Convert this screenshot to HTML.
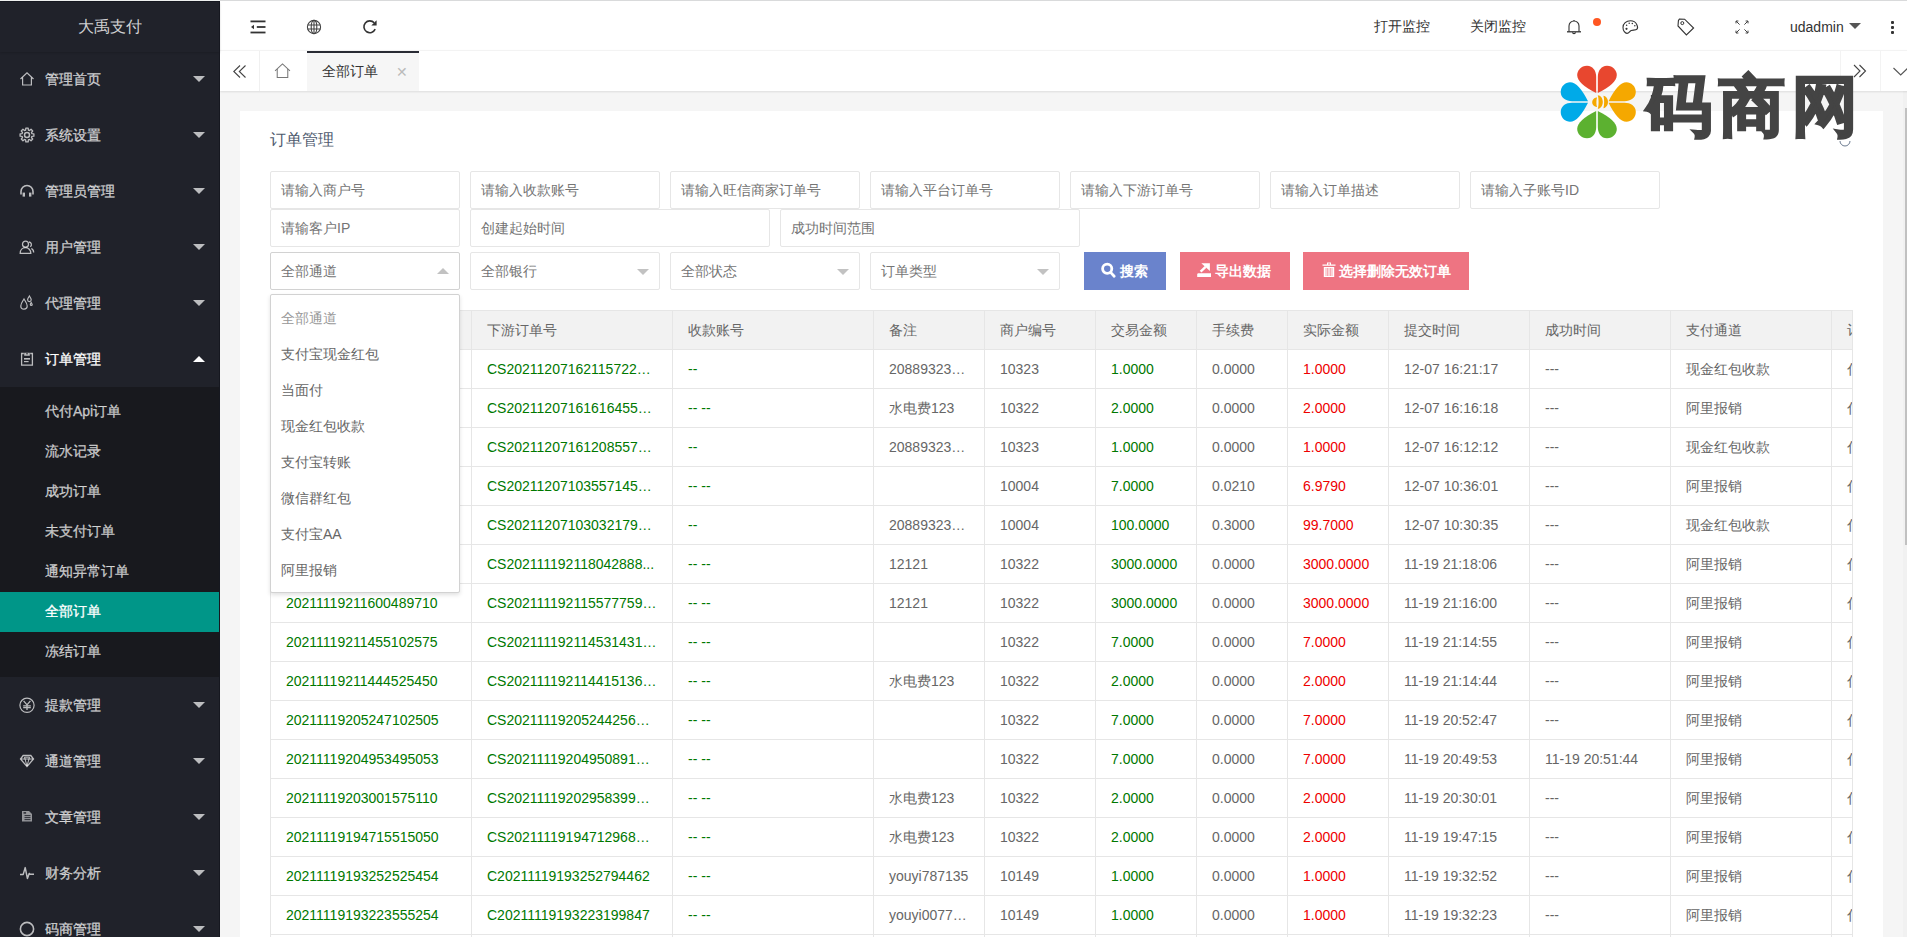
<!DOCTYPE html>
<html><head><meta charset="utf-8"><title>订单管理</title>
<style>
*{margin:0;padding:0;box-sizing:border-box}
html,body{width:1907px;height:937px;overflow:hidden;background:#f5f5f5;font-family:"Liberation Sans",sans-serif;font-size:14px;color:#666;position:relative}
.ic{position:absolute;display:block;overflow:visible}
#topline{position:absolute;left:220px;top:0;width:1687px;height:1px;background:#d9dadb;z-index:50}
#topline2{position:absolute;left:0;top:0;width:220px;height:1px;background:#eef0ef;z-index:50}
#topline3{position:absolute;left:0;top:1px;width:220px;height:1px;background:#161820;z-index:50}
#sideedge{position:absolute;left:219px;top:1px;width:1px;height:936px;background:#161820;z-index:50}
/* sidebar */
#side{position:absolute;left:0;top:0;width:220px;height:937px;background:#20222a;z-index:10}
#side .logo{position:absolute;left:0;top:2px;width:220px;height:50px;line-height:50px;text-align:center;font-size:16px;color:rgba(255,255,255,.8);box-shadow:0 1px 2px 0 rgba(0,0,0,.15)}
.mi{position:absolute;left:0;width:220px;height:56px;color:rgba(255,255,255,.7)}
.mi .ic{color:rgba(255,255,255,.7)}
.mi .mt{position:absolute;left:45px;top:1px;line-height:56px;font-size:14px;-webkit-text-stroke:0.3px currentColor}
.mi i{position:absolute;left:193px;top:26px;width:0;height:0;border-left:6px solid transparent;border-right:6px solid transparent}
.mi i.dn{border-top:6px solid rgba(255,255,255,.7)}
.mi i.up{border-bottom:6px solid #fff;top:26px}
.mi.open{color:#fff}
.child{position:absolute;left:0;top:387px;width:220px;height:290px;background:#18191e}
.ci{position:absolute;left:0;width:220px;height:40px;line-height:38px;padding-left:45px;color:rgba(255,255,255,.7);-webkit-text-stroke:0.3px currentColor}
.ci.act{background:#009688;color:#fff}
/* header */
#hdr{position:absolute;left:220px;top:0;width:1687px;height:50px;background:#fff;color:#333}
#hdr .ic{color:#333}
.htxt{position:absolute;top:0;line-height:50px;font-size:14px;color:#333}
/* tabs */
#tabs{position:absolute;left:220px;top:50px;width:1700px;height:41px;background:#fff;border-top:1px solid #f3f3f3;box-shadow:0 1px 2px 0 rgba(0,0,0,.1);z-index:5}
.tctl{position:absolute;top:0;height:40px;width:40px;border-left:1px solid #f3f3f3}
.tab{position:absolute;top:0;height:40px;line-height:40px}
/* card */
#card{position:absolute;left:240px;top:111px;width:1643px;height:840px;background:#fff}
.ctitle{position:absolute;left:270px;top:0;line-height:50px;font-size:16px}
.inp{position:absolute;height:38px;line-height:36px;border:1px solid #e6e6e6;background:#fff;padding-left:10px;color:#757575;font-size:14px;border-radius:2px}
.inp.sel i{position:absolute;right:10px;top:16px;border-left:6px solid transparent;border-right:6px solid transparent;border-top:6px solid #c2c2c2}
.inp.sel.on{border-color:#d2d2d2}
.inp.sel.on i{border-top:0;border-bottom:6px solid #c2c2c2;top:15px}
.btn{position:absolute;top:252px;height:38px;line-height:38px;color:#fff;font-size:14px;text-align:left}
/* table */
#tbl{position:absolute;left:270px;top:310px;width:1583px;height:700px;overflow:hidden;border-left:1px solid #e6e6e6;border-top:1px solid #e6e6e6}
#tbl:after{content:"";position:absolute;right:0;top:0;width:1px;height:100%;background:#e6e6e6}
.thead{position:absolute;left:0;top:0;width:1720px;height:39px;background:#f2f2f2;border-bottom:1px solid #e6e6e6}
.th,.td{position:absolute;top:0;height:38px;line-height:38px;padding-left:15px;border-right:1px solid #e6e6e6;white-space:nowrap;overflow:hidden;font-size:14px}
.th{color:#666}
.tr{position:absolute;left:0;width:1720px;height:39px;border-bottom:1px solid #e6e6e6}
.td{color:#666;letter-spacing:0}
.td.g{color:#007800}
.td.r{color:#e00}
/* dropdown */
.dd{position:absolute;left:270px;top:294px;width:190px;height:299px;background:#fff;border:1px solid #d2d2d2;box-shadow:0 2px 4px rgba(0,0,0,.12);padding:5px 0;z-index:20;border-radius:2px}
.ddi{height:36px;line-height:36px;padding-left:10px;color:#666}
.ddi.tip{color:#999}
/* scrollbar */
#sb{position:absolute;left:1903px;top:91px;width:4px;height:846px;background:#f1f1f1}
#sbt{position:absolute;left:1905px;top:108px;width:2px;height:437px;background:#c1c1c1}

</style></head>
<body>
<div id="topline"></div><div id="topline2"></div><div id="topline3"></div><div id="sideedge"></div>
<div id="side">
<div class="logo">大禹支付</div>
<div class="mi" style="top:50px"><svg class="ic" style="left:19px;top:21px;width:16px;height:16px" viewBox="0 0 16 16" ><path d="M1.5 8 L8 1.8 L14.5 8" fill="none" stroke="currentColor" stroke-width="1.2"/><path d="M3.6 6.5 V14 H12.4 V6.5" fill="none" stroke="currentColor" stroke-width="1.2"/></svg><span class="mt">管理首页</span><i class="dn"></i></div>
<div class="mi" style="top:106px"><svg class="ic" style="left:19px;top:21px;width:16px;height:16px" viewBox="0 0 16 16" ><g fill="none" stroke="currentColor" stroke-width="1.3" stroke-linejoin="round"><path d="M6.64 3.08 L6.82 1.10 L9.18 1.10 L9.36 3.08 L10.51 3.56 L12.04 2.28 L13.72 3.96 L12.44 5.49 L12.92 6.64 L14.90 6.82 L14.90 9.18 L12.92 9.36 L12.44 10.51 L13.72 12.04 L12.04 13.72 L10.51 12.44 L9.36 12.92 L9.18 14.90 L6.82 14.90 L6.64 12.92 L5.49 12.44 L3.96 13.72 L2.28 12.04 L3.56 10.51 L3.08 9.36 L1.10 9.18 L1.10 6.82 L3.08 6.64 L3.56 5.49 L2.28 3.96 L3.96 2.28 L5.49 3.56z"/><circle cx="8" cy="8" r="2.5" stroke-width="1.5"/></g></svg><span class="mt">系统设置</span><i class="dn"></i></div>
<div class="mi" style="top:162px"><svg class="ic" style="left:19px;top:21px;width:16px;height:16px" viewBox="0 0 16 16" ><g fill="none" stroke="currentColor" stroke-width="1.6"><path d="M2 11.5 V8.5 A6 6 0 0 1 14 8.5 V11.5"/></g><rect x="3.6" y="9.6" width="2.4" height="4" fill="currentColor"/><rect x="10" y="9.6" width="2.4" height="4" fill="currentColor"/></svg><span class="mt">管理员管理</span><i class="dn"></i></div>
<div class="mi" style="top:218px"><svg class="ic" style="left:19px;top:21px;width:16px;height:16px" viewBox="0 0 16 16" ><g fill="none" stroke="currentColor" stroke-width="1.3"><path d="M6.5 2.2a3 3 0 1 1 0 6a3 3 0 1 1 0-6z"/><path d="M1.2 14.3c0-3.2 2.3-5.6 5.3-5.6s5.3 2.4 5.3 5.6z"/><path d="M10 3a2.6 2.6 0 0 1 1.2 4.8M12.4 9.4c1.4.9 2.3 2.5 2.3 4.2"/></g></svg><span class="mt">用户管理</span><i class="dn"></i></div>
<div class="mi" style="top:274px"><svg class="ic" style="left:19px;top:21px;width:16px;height:16px" viewBox="0 0 16 16" ><g fill="none" stroke="currentColor" stroke-width="1.2"><path d="M5 4 C3.5 6.5 1.8 8.5 1.8 10.9 a3.2 3.2 0 0 0 6.4 0 C8.2 8.5 6.5 6.5 5 4z"/><path d="M10.4 1 C9.6 2.4 8.6 3.5 8.6 4.8 a1.8 1.8 0 0 0 3.6 0 C12.2 3.5 11.2 2.4 10.4 1z"/><path d="M12.2 7.6 C11.8 8.3 11.3 8.9 11.3 9.5 a.95 .95 0 0 0 1.9 0 C13.2 8.9 12.6 8.3 12.2 7.6z"/></g></svg><span class="mt">代理管理</span><i class="dn"></i></div>
<div class="mi open" style="top:330px"><svg class="ic" style="left:19px;top:21px;width:16px;height:16px" viewBox="0 0 16 16" ><g fill="none" stroke="currentColor" stroke-width="1.3"><path d="M4.8 2.5 H2.6 V14.2 H13.4 V2.5 H11.2"/></g><path d="M5.2 1.8 h5.6 v3 h-5.6z" fill="currentColor"/><circle cx="8" cy="2.8" r="0.8" fill="#20222a"/><rect x="5" y="7" width="6" height="1.6" fill="currentColor"/><rect x="5" y="10" width="4.6" height="1.2" fill="currentColor"/></svg><span class="mt">订单管理</span><i class="up"></i></div>
<div class="mi" style="top:676px"><svg class="ic" style="left:19px;top:21px;width:16px;height:16px" viewBox="0 0 16 16" ><g fill="none" stroke="currentColor"><circle cx="8" cy="8.3" r="7.1" stroke-width="1.2"/><path d="M4.6 3.8 L8 7.8 L11.4 3.8 M8 7.8 V13 M4.2 8.8 H11.8 M4.2 10.7 H11.8" stroke-width="1.3"/></g></svg><span class="mt">提款管理</span><i class="dn"></i></div>
<div class="mi" style="top:732px"><svg class="ic" style="left:19px;top:21px;width:16px;height:16px" viewBox="0 0 16 16" ><g fill="none" stroke="currentColor" stroke-width="1.3"><path d="M4.2 2.5 H11.8 L14.5 6 L8 13.5 L1.5 6z"/><path d="M5.5 4.2 H10.5 L8 13 z M1.8 6 H14.2" stroke-width="1"/></g></svg><span class="mt">通道管理</span><i class="dn"></i></div>
<div class="mi" style="top:788px"><svg class="ic" style="left:19px;top:21px;width:16px;height:16px" viewBox="0 0 16 16" ><path d="M3 2 H10 L13 5 V12.5 H3z" fill="currentColor" opacity=".75"/><g fill="#20222a"><rect x="4.5" y="3.2" width="2.6" height="1.4"/><rect x="5.5" y="6.2" width="6" height=".9"/><rect x="5.5" y="8.2" width="6" height=".9"/><rect x="5.5" y="10.2" width="6" height=".9"/></g></svg><span class="mt">文章管理</span><i class="dn"></i></div>
<div class="mi" style="top:844px"><svg class="ic" style="left:19px;top:21px;width:16px;height:16px" viewBox="0 0 16 16" ><path d="M1 9.4 H4.2 L6.2 2.6 L8.4 13.4 L10.2 8.4 L11 9.2 H15" fill="none" stroke="currentColor" stroke-width="1.5" stroke-linejoin="round"/></svg><span class="mt">财务分析</span><i class="dn"></i></div>
<div class="mi" style="top:900px"><svg class="ic" style="left:19px;top:21px;width:16px;height:16px" viewBox="0 0 16 16" ><circle cx="8" cy="8" r="6.6" fill="none" stroke="currentColor" stroke-width="1.6"/></svg><span class="mt">码商管理</span><i class="dn"></i></div>
<div class="child">
<div class="ci" style="top:5px">代付Api订单</div>
<div class="ci" style="top:45px">流水记录</div>
<div class="ci" style="top:85px">成功订单</div>
<div class="ci" style="top:125px">未支付订单</div>
<div class="ci" style="top:165px">通知异常订单</div>
<div class="ci act" style="top:205px">全部订单</div>
<div class="ci" style="top:245px">冻结订单</div>
</div></div>
<div id="hdr">
  <svg class="ic" style="left:30px;top:19px;width:16px;height:16px" viewBox="0 0 16 16"><rect x="0.5" y="1.5" width="15" height="1.8" fill="#333"/><rect x="6.8" y="7.1" width="8.7" height="1.8" fill="#333"/><rect x="0.5" y="12.6" width="15" height="1.8" fill="#333"/><path d="M1 8 L4 5.8 V10.2z" fill="#333"/></svg>
  <svg class="ic" style="left:86px;top:19px;width:16px;height:16px" viewBox="0 0 16 16"><g fill="none" stroke="#444" stroke-width="1.1"><circle cx="8" cy="8" r="6.6"/><ellipse cx="8" cy="8" rx="2.8" ry="6.6"/><path d="M8 1.4 V14.6 M1.6 6 H14.4 M1.6 10 H14.4"/></g></svg>
  <svg class="ic" style="left:142px;top:19px;width:16px;height:16px" viewBox="0 0 16 16"><path d="M13.2 10.2 A5.9 5.9 0 1 1 12.2 3.8" fill="none" stroke="#333" stroke-width="1.6"/><path d="M14.6 1.3 V6.6 H9.3z" fill="#333"/></svg>
  <div class="htxt" style="left:1154px;top:1px">打开监控</div>
  <div class="htxt" style="left:1250px;top:1px">关闭监控</div>
  <svg class="ic" style="left:1346px;top:19px;width:16px;height:16px" viewBox="0 0 16 16"><g fill="none" stroke="#333" stroke-width="1.1"><path d="M3 12.8 V7 A5 5 0 0 1 13 7 V12.8"/><path d="M1 12.8 H15" stroke-width="1.3"/><path d="M6.6 13.2 A1.4 1.4 0 0 0 9.4 13.2"/><path d="M8 1 V2"/></g></svg>
  <div style="position:absolute;left:1373px;top:18px;width:8px;height:8px;border-radius:50%;background:#ff5722"></div>
  <svg class="ic" style="left:1402px;top:19px;width:17px;height:16px" viewBox="0 0 17 16"><g fill="none" stroke="#333" stroke-width="1.1"><path d="M8.5 1.8 C4.2 1.8 1 4.6 1 8.4 C1 11.8 3.2 14.4 5 14.4 C7.2 14.4 7.5 12 9.2 11.4 C11 10.8 13.8 11.6 15 10.2 C16.4 8.6 15 1.8 8.5 1.8z"/></g><g fill="#333"><circle cx="4.5" cy="9.8" r="1.1"/><circle cx="4.6" cy="6.2" r=".75"/><circle cx="7.2" cy="4.2" r=".75"/><circle cx="10.3" cy="4.4" r=".75"/><circle cx="12.8" cy="6.8" r=".75"/></g></svg>
  <svg class="ic" style="left:1457px;top:18px;width:18px;height:18px" viewBox="0 0 18 18"><g fill="none" stroke="#333" stroke-width="1.1"><path d="M1.4 2.6 L2.4 1 L7.6 1.2 L16.6 10 L9.4 17 L1 8z"/><circle cx="5.3" cy="5.1" r="1.5" stroke-width="1"/></g></svg>
  <svg class="ic" style="left:1515px;top:20px;width:14px;height:14px" viewBox="0 0 14 14"><g fill="none" stroke="#444" stroke-width="1"><path d="M1 1 L4.6 4.6 M1 1 H3.4 M1 1 V3.4"/><path d="M13 1 L9.4 4.6 M13 1 H10.6 M13 1 V3.4"/><path d="M1 13 L4.6 9.4 M1 13 H3.4 M1 13 V10.6"/><path d="M13 13 L9.4 9.4 M13 13 H10.6 M13 13 V10.6"/></g></svg>
  <div class="htxt" style="left:1570px;top:2px">udadmin</div>
  <div style="position:absolute;left:1629px;top:23px;width:0;height:0;border-left:6px solid transparent;border-right:6px solid transparent;border-top:6px solid #555"></div>
  <div style="position:absolute;left:1671px;top:21px;width:3px;height:3px;background:#333;border-radius:1px"></div>
  <div style="position:absolute;left:1671px;top:26px;width:3px;height:3px;background:#333;border-radius:1px"></div>
  <div style="position:absolute;left:1671px;top:31px;width:3px;height:3px;background:#333;border-radius:1px"></div>
</div>
<div id="tabs">
  <svg class="ic" style="left:12px;top:13px;width:16px;height:16px" viewBox="0 0 16 16"><path d="M8 1.5 L1.8 7.5 L8 13.5 M13.5 1.5 L7.3 7.5 L13.5 13.5" fill="none" stroke="#444" stroke-width="1.1"/></svg>
  <div class="tctl" style="left:39px;width:1px;border-left:1px solid #f0f0f0"></div>
  <svg class="ic" style="left:54px;top:12px;width:17px;height:15px" viewBox="0 0 16 14.5"><path d="M0.8 7.6 L8 0.9 L15.2 7.6" fill="none" stroke="#777" stroke-width="1"/><path d="M2.9 5.9 V14 H13.1 V5.9" fill="none" stroke="#777" stroke-width="1"/></svg>
  <div class="tab" style="left:87px;width:112px;background:#f6f6f6"><div style="position:absolute;left:0;top:0;width:112px;height:2px;background:#292b34"></div><span style="position:absolute;left:15px;top:0;color:#333">全部订单</span><span style="position:absolute;left:89px;top:1px;color:#bbb;font-size:14px">✕</span></div>
  <div class="tctl" style="left:1620px"></div>
  <svg class="ic" style="left:1633px;top:13px;width:14px;height:14px" viewBox="0 0 14 14"><path d="M1 1 L7 7 L1 13 M6.5 1 L12.5 7 L6.5 13" fill="none" stroke="#444" stroke-width="1.1"/></svg>
  <div class="tctl" style="left:1660px"></div>
  <svg class="ic" style="left:1673px;top:16px;width:16px;height:9px" viewBox="0 0 16 9"><path d="M0.5 1 L7.7 8 L14.9 1" fill="none" stroke="#555" stroke-width="1.1"/></svg>
</div>
<div id="sb"></div><div id="sbt"></div>
<div id="card"></div>
<div class="ctitle" style="left:270px;top:115px;color:#4e5a6e">订单管理</div>
<div class="inp" style="left:270px;top:171px;width:190px">请输入商户号</div>
<div class="inp" style="left:470px;top:171px;width:190px">请输入收款账号</div>
<div class="inp" style="left:670px;top:171px;width:190px">请输入旺信商家订单号</div>
<div class="inp" style="left:870px;top:171px;width:190px">请输入平台订单号</div>
<div class="inp" style="left:1070px;top:171px;width:190px">请输入下游订单号</div>
<div class="inp" style="left:1270px;top:171px;width:190px">请输入订单描述</div>
<div class="inp" style="left:1470px;top:171px;width:190px">请输入子账号ID</div>
<div class="inp" style="left:270px;top:209px;width:190px">请输客户IP</div>
<div class="inp" style="left:470px;top:209px;width:300px">创建起始时间</div>
<div class="inp" style="left:780px;top:209px;width:300px">成功时间范围</div>
<div class="inp sel on" style="left:270px;top:252px;width:190px">全部通道<i></i></div>
<div class="inp sel" style="left:470px;top:252px;width:190px">全部银行<i></i></div>
<div class="inp sel" style="left:670px;top:252px;width:190px">全部状态<i></i></div>
<div class="inp sel" style="left:870px;top:252px;width:190px">订单类型<i></i></div>
<div class="btn" style="left:1084px;width:82px;background:#6a83cc">
  <svg class="ic" style="left:17px;top:11px;width:15px;height:16px" viewBox="0 0 15 16"><circle cx="6.2" cy="5.8" r="4.6" fill="none" stroke="#fff" stroke-width="2.8"/><path d="M9.6 9.4 L13.2 13.2" stroke="#fff" stroke-width="2.8" stroke-linecap="round"/></svg>
  <span style="position:absolute;left:36px;top:0;font-weight:bold">搜索</span></div>
<div class="btn" style="left:1180px;width:110px;background:#ee7482">
  <svg class="ic" style="left:17px;top:11px;width:15px;height:16px" viewBox="0 0 15 16"><path d="M1 10.2 H14 V14.1 H0.2 V11z" fill="#fff"/><path d="M4.3 0.2 H12.9 V7.9z" fill="#fff"/><path d="M3.6 8.6 L8.6 3.8" stroke="#fff" stroke-width="2.4"/></svg>
  <span style="position:absolute;left:35px;top:0;font-weight:bold">导出数据</span></div>
<div class="btn" style="left:1303px;width:166px;background:#ee7482">
  <svg class="ic" style="left:19px;top:10px;width:14px;height:16px" viewBox="0 0 14 16"><path d="M0.5 2.5 H13.5 V3.8 H0.5z M5 0.5 H9 V2.5 H8 V1.4 H6 V2.5 H5z" fill="#fff"/><path d="M1.8 5 H12.2 V15 H1.8z" fill="#fff"/><path d="M4 6 V14 M5.5 6 V14 M7 6 V14 M8.5 6 V14 M10 6 V14" stroke="#ee7482" stroke-width=".6"/></svg>
  <span style="position:absolute;left:36px;top:0;font-weight:bold">选择删除无效订单</span></div>
<div id="tbl">
<div class="thead">
<div class="th" style="left:0px;width:201px">订单号</div>
<div class="th" style="left:201px;width:201px">下游订单号</div>
<div class="th" style="left:402px;width:201px">收款账号</div>
<div class="th" style="left:603px;width:111px">备注</div>
<div class="th" style="left:714px;width:111px">商户编号</div>
<div class="th" style="left:825px;width:101px">交易金额</div>
<div class="th" style="left:926px;width:91px">手续费</div>
<div class="th" style="left:1017px;width:101px">实际金额</div>
<div class="th" style="left:1118px;width:141px">提交时间</div>
<div class="th" style="left:1259px;width:141px">成功时间</div>
<div class="th" style="left:1400px;width:161px">支付通道</div>
<div class="th" style="left:1561px;width:159px">订单描述</div>
</div>
<div class="tr" style="top:39px">
<div class="td g" style="left:0px;width:201px">20211207162117xxxxx</div>
<div class="td g" style="left:201px;width:201px">CS20211207162115722…</div>
<div class="td g" style="left:402px;width:201px">--</div>
<div class="td n" style="left:603px;width:111px">20889323…</div>
<div class="td n" style="left:714px;width:111px">10323</div>
<div class="td g" style="left:825px;width:101px">1.0000</div>
<div class="td n" style="left:926px;width:91px">0.0000</div>
<div class="td r" style="left:1017px;width:101px">1.0000</div>
<div class="td n" style="left:1118px;width:141px">12-07 16:21:17</div>
<div class="td n" style="left:1259px;width:141px">---</div>
<div class="td n" style="left:1400px;width:161px">现金红包收款</div>
<div class="td n" style="left:1561px;width:159px">付</div>
</div>
<div class="tr" style="top:78px">
<div class="td g" style="left:0px;width:201px">20211207161618xxxxx</div>
<div class="td g" style="left:201px;width:201px">CS20211207161616455…</div>
<div class="td g" style="left:402px;width:201px">-- --</div>
<div class="td n" style="left:603px;width:111px">水电费123</div>
<div class="td n" style="left:714px;width:111px">10322</div>
<div class="td g" style="left:825px;width:101px">2.0000</div>
<div class="td n" style="left:926px;width:91px">0.0000</div>
<div class="td r" style="left:1017px;width:101px">2.0000</div>
<div class="td n" style="left:1118px;width:141px">12-07 16:16:18</div>
<div class="td n" style="left:1259px;width:141px">---</div>
<div class="td n" style="left:1400px;width:161px">阿里报销</div>
<div class="td n" style="left:1561px;width:159px">付</div>
</div>
<div class="tr" style="top:117px">
<div class="td g" style="left:0px;width:201px">20211207161212xxxxx</div>
<div class="td g" style="left:201px;width:201px">CS20211207161208557…</div>
<div class="td g" style="left:402px;width:201px">--</div>
<div class="td n" style="left:603px;width:111px">20889323…</div>
<div class="td n" style="left:714px;width:111px">10323</div>
<div class="td g" style="left:825px;width:101px">1.0000</div>
<div class="td n" style="left:926px;width:91px">0.0000</div>
<div class="td r" style="left:1017px;width:101px">1.0000</div>
<div class="td n" style="left:1118px;width:141px">12-07 16:12:12</div>
<div class="td n" style="left:1259px;width:141px">---</div>
<div class="td n" style="left:1400px;width:161px">现金红包收款</div>
<div class="td n" style="left:1561px;width:159px">付</div>
</div>
<div class="tr" style="top:156px">
<div class="td g" style="left:0px;width:201px">20211207103601xxxxx</div>
<div class="td g" style="left:201px;width:201px">CS20211207103557145…</div>
<div class="td g" style="left:402px;width:201px">-- --</div>
<div class="td n" style="left:603px;width:111px"></div>
<div class="td n" style="left:714px;width:111px">10004</div>
<div class="td g" style="left:825px;width:101px">7.0000</div>
<div class="td n" style="left:926px;width:91px">0.0210</div>
<div class="td r" style="left:1017px;width:101px">6.9790</div>
<div class="td n" style="left:1118px;width:141px">12-07 10:36:01</div>
<div class="td n" style="left:1259px;width:141px">---</div>
<div class="td n" style="left:1400px;width:161px">阿里报销</div>
<div class="td n" style="left:1561px;width:159px">付</div>
</div>
<div class="tr" style="top:195px">
<div class="td g" style="left:0px;width:201px">20211207103035xxxxx</div>
<div class="td g" style="left:201px;width:201px">CS20211207103032179…</div>
<div class="td g" style="left:402px;width:201px">--</div>
<div class="td n" style="left:603px;width:111px">20889323…</div>
<div class="td n" style="left:714px;width:111px">10004</div>
<div class="td g" style="left:825px;width:101px">100.0000</div>
<div class="td n" style="left:926px;width:91px">0.3000</div>
<div class="td r" style="left:1017px;width:101px">99.7000</div>
<div class="td n" style="left:1118px;width:141px">12-07 10:30:35</div>
<div class="td n" style="left:1259px;width:141px">---</div>
<div class="td n" style="left:1400px;width:161px">现金红包收款</div>
<div class="td n" style="left:1561px;width:159px">付</div>
</div>
<div class="tr" style="top:234px">
<div class="td g" style="left:0px;width:201px">20211119211806xxxxx</div>
<div class="td g" style="left:201px;width:201px">CS202111192118042888...</div>
<div class="td g" style="left:402px;width:201px">-- --</div>
<div class="td n" style="left:603px;width:111px">12121</div>
<div class="td n" style="left:714px;width:111px">10322</div>
<div class="td g" style="left:825px;width:101px">3000.0000</div>
<div class="td n" style="left:926px;width:91px">0.0000</div>
<div class="td r" style="left:1017px;width:101px">3000.0000</div>
<div class="td n" style="left:1118px;width:141px">11-19 21:18:06</div>
<div class="td n" style="left:1259px;width:141px">---</div>
<div class="td n" style="left:1400px;width:161px">阿里报销</div>
<div class="td n" style="left:1561px;width:159px">付</div>
</div>
<div class="tr" style="top:273px">
<div class="td g" style="left:0px;width:201px">20211119211600489710</div>
<div class="td g" style="left:201px;width:201px">CS202111192115577759…</div>
<div class="td g" style="left:402px;width:201px">-- --</div>
<div class="td n" style="left:603px;width:111px">12121</div>
<div class="td n" style="left:714px;width:111px">10322</div>
<div class="td g" style="left:825px;width:101px">3000.0000</div>
<div class="td n" style="left:926px;width:91px">0.0000</div>
<div class="td r" style="left:1017px;width:101px">3000.0000</div>
<div class="td n" style="left:1118px;width:141px">11-19 21:16:00</div>
<div class="td n" style="left:1259px;width:141px">---</div>
<div class="td n" style="left:1400px;width:161px">阿里报销</div>
<div class="td n" style="left:1561px;width:159px">付</div>
</div>
<div class="tr" style="top:312px">
<div class="td g" style="left:0px;width:201px">20211119211455102575</div>
<div class="td g" style="left:201px;width:201px">CS202111192114531431…</div>
<div class="td g" style="left:402px;width:201px">-- --</div>
<div class="td n" style="left:603px;width:111px"></div>
<div class="td n" style="left:714px;width:111px">10322</div>
<div class="td g" style="left:825px;width:101px">7.0000</div>
<div class="td n" style="left:926px;width:91px">0.0000</div>
<div class="td r" style="left:1017px;width:101px">7.0000</div>
<div class="td n" style="left:1118px;width:141px">11-19 21:14:55</div>
<div class="td n" style="left:1259px;width:141px">---</div>
<div class="td n" style="left:1400px;width:161px">阿里报销</div>
<div class="td n" style="left:1561px;width:159px">付</div>
</div>
<div class="tr" style="top:351px">
<div class="td g" style="left:0px;width:201px">20211119211444525450</div>
<div class="td g" style="left:201px;width:201px">CS202111192114415136…</div>
<div class="td g" style="left:402px;width:201px">-- --</div>
<div class="td n" style="left:603px;width:111px">水电费123</div>
<div class="td n" style="left:714px;width:111px">10322</div>
<div class="td g" style="left:825px;width:101px">2.0000</div>
<div class="td n" style="left:926px;width:91px">0.0000</div>
<div class="td r" style="left:1017px;width:101px">2.0000</div>
<div class="td n" style="left:1118px;width:141px">11-19 21:14:44</div>
<div class="td n" style="left:1259px;width:141px">---</div>
<div class="td n" style="left:1400px;width:161px">阿里报销</div>
<div class="td n" style="left:1561px;width:159px">付</div>
</div>
<div class="tr" style="top:390px">
<div class="td g" style="left:0px;width:201px">20211119205247102505</div>
<div class="td g" style="left:201px;width:201px">CS20211119205244256…</div>
<div class="td g" style="left:402px;width:201px">-- --</div>
<div class="td n" style="left:603px;width:111px"></div>
<div class="td n" style="left:714px;width:111px">10322</div>
<div class="td g" style="left:825px;width:101px">7.0000</div>
<div class="td n" style="left:926px;width:91px">0.0000</div>
<div class="td r" style="left:1017px;width:101px">7.0000</div>
<div class="td n" style="left:1118px;width:141px">11-19 20:52:47</div>
<div class="td n" style="left:1259px;width:141px">---</div>
<div class="td n" style="left:1400px;width:161px">阿里报销</div>
<div class="td n" style="left:1561px;width:159px">付</div>
</div>
<div class="tr" style="top:429px">
<div class="td g" style="left:0px;width:201px">20211119204953495053</div>
<div class="td g" style="left:201px;width:201px">CS20211119204950891…</div>
<div class="td g" style="left:402px;width:201px">-- --</div>
<div class="td n" style="left:603px;width:111px"></div>
<div class="td n" style="left:714px;width:111px">10322</div>
<div class="td g" style="left:825px;width:101px">7.0000</div>
<div class="td n" style="left:926px;width:91px">0.0000</div>
<div class="td r" style="left:1017px;width:101px">7.0000</div>
<div class="td n" style="left:1118px;width:141px">11-19 20:49:53</div>
<div class="td n" style="left:1259px;width:141px">11-19 20:51:44</div>
<div class="td n" style="left:1400px;width:161px">阿里报销</div>
<div class="td n" style="left:1561px;width:159px">付</div>
</div>
<div class="tr" style="top:468px">
<div class="td g" style="left:0px;width:201px">20211119203001575110</div>
<div class="td g" style="left:201px;width:201px">CS20211119202958399…</div>
<div class="td g" style="left:402px;width:201px">-- --</div>
<div class="td n" style="left:603px;width:111px">水电费123</div>
<div class="td n" style="left:714px;width:111px">10322</div>
<div class="td g" style="left:825px;width:101px">2.0000</div>
<div class="td n" style="left:926px;width:91px">0.0000</div>
<div class="td r" style="left:1017px;width:101px">2.0000</div>
<div class="td n" style="left:1118px;width:141px">11-19 20:30:01</div>
<div class="td n" style="left:1259px;width:141px">---</div>
<div class="td n" style="left:1400px;width:161px">阿里报销</div>
<div class="td n" style="left:1561px;width:159px">付</div>
</div>
<div class="tr" style="top:507px">
<div class="td g" style="left:0px;width:201px">20211119194715515050</div>
<div class="td g" style="left:201px;width:201px">CS20211119194712968…</div>
<div class="td g" style="left:402px;width:201px">-- --</div>
<div class="td n" style="left:603px;width:111px">水电费123</div>
<div class="td n" style="left:714px;width:111px">10322</div>
<div class="td g" style="left:825px;width:101px">2.0000</div>
<div class="td n" style="left:926px;width:91px">0.0000</div>
<div class="td r" style="left:1017px;width:101px">2.0000</div>
<div class="td n" style="left:1118px;width:141px">11-19 19:47:15</div>
<div class="td n" style="left:1259px;width:141px">---</div>
<div class="td n" style="left:1400px;width:161px">阿里报销</div>
<div class="td n" style="left:1561px;width:159px">付</div>
</div>
<div class="tr" style="top:546px">
<div class="td g" style="left:0px;width:201px">20211119193252525454</div>
<div class="td g" style="left:201px;width:201px">C20211119193252794462</div>
<div class="td g" style="left:402px;width:201px">-- --</div>
<div class="td n" style="left:603px;width:111px">youyi787135</div>
<div class="td n" style="left:714px;width:111px">10149</div>
<div class="td g" style="left:825px;width:101px">1.0000</div>
<div class="td n" style="left:926px;width:91px">0.0000</div>
<div class="td r" style="left:1017px;width:101px">1.0000</div>
<div class="td n" style="left:1118px;width:141px">11-19 19:32:52</div>
<div class="td n" style="left:1259px;width:141px">---</div>
<div class="td n" style="left:1400px;width:161px">阿里报销</div>
<div class="td n" style="left:1561px;width:159px">付</div>
</div>
<div class="tr" style="top:585px">
<div class="td g" style="left:0px;width:201px">20211119193223555254</div>
<div class="td g" style="left:201px;width:201px">C20211119193223199847</div>
<div class="td g" style="left:402px;width:201px">-- --</div>
<div class="td n" style="left:603px;width:111px">youyi0077…</div>
<div class="td n" style="left:714px;width:111px">10149</div>
<div class="td g" style="left:825px;width:101px">1.0000</div>
<div class="td n" style="left:926px;width:91px">0.0000</div>
<div class="td r" style="left:1017px;width:101px">1.0000</div>
<div class="td n" style="left:1118px;width:141px">11-19 19:32:23</div>
<div class="td n" style="left:1259px;width:141px">---</div>
<div class="td n" style="left:1400px;width:161px">阿里报销</div>
<div class="td n" style="left:1561px;width:159px">付</div>
</div>
<div class="tr" style="top:624px">
<div class="td g" style="left:0px;width:201px">20211119192xxxxxxxxx</div>
<div class="td g" style="left:201px;width:201px">C20211119192xxxxxxxx</div>
<div class="td g" style="left:402px;width:201px">-- --</div>
<div class="td n" style="left:603px;width:111px"></div>
<div class="td n" style="left:714px;width:111px">10149</div>
<div class="td g" style="left:825px;width:101px">1.0000</div>
<div class="td n" style="left:926px;width:91px">0.0000</div>
<div class="td r" style="left:1017px;width:101px">1.0000</div>
<div class="td n" style="left:1118px;width:141px">11-19 19:2x:xx</div>
<div class="td n" style="left:1259px;width:141px">---</div>
<div class="td n" style="left:1400px;width:161px">阿里报销</div>
<div class="td n" style="left:1561px;width:159px">付</div>
</div>
</div>
<div class="dd">
<div class="ddi tip">全部通道</div>
<div class="ddi ">支付宝现金红包</div>
<div class="ddi ">当面付</div>
<div class="ddi ">现金红包收款</div>
<div class="ddi ">支付宝转账</div>
<div class="ddi ">微信群红包</div>
<div class="ddi ">支付宝AA</div>
<div class="ddi ">阿里报销</div>
</div>
<svg style="position:absolute;left:1838px;top:134px;width:14px;height:14px;z-index:4" viewBox="0 0 14 14"><path d="M2 7 A5 5 0 1 0 12 7" fill="none" stroke="#6b7a8f" stroke-width="1"/></svg>
<div id="logo" style="position:absolute;left:0;top:0;z-index:30">
<svg style="position:absolute;left:1557px;top:62px;width:80px;height:80px;overflow:visible" viewBox="-40 -40 80 80">
  <defs><path id="pt" d="M -0.8 -9 L -0.8 -25 C -0.8 -31, -4 -36.3, -10 -36.3 C -16 -36.3, -19.8 -31.5, -19.8 -27 C -19.8 -21, -13 -15, -0.8 -9 Z"/></defs>
  <use href="#pt" fill="#e8472f"/>
  <use href="#pt" fill="#e8472f" transform="scale(-1,1)"/>
  <use href="#pt" fill="#f5a800" transform="translate(2.5,0) rotate(90)"/>
  <use href="#pt" fill="#f5a800" transform="translate(2.5,0) rotate(90) scale(-1,1)"/>
  <use href="#pt" fill="#5cb130" transform="rotate(180)"/>
  <use href="#pt" fill="#5cb130" transform="rotate(180) scale(-1,1)"/>
  <use href="#pt" fill="#00aae8" transform="rotate(270)"/>
  <use href="#pt" fill="#00aae8" transform="rotate(270) scale(-1,1)"/>
  <g fill="#f5a800"><path d="M0 -4.6 C-2.8 -4.6 -4.8 -2.3 -4.8 0.3 C-4.8 2.8 -2.8 5 0 5 C-0.8 2.5 -0.8 -2 0 -4.6z"/><path d="M0.8 -6.8 C3.6 -6.8 5.8 -3.5 5.8 0 C5.8 3.5 3.6 6.8 0.8 6.8 C1.8 3.5 1.8 -3.5 0.8 -6.8z"/><path d="M6.4 -6.2 C9.2 -5.8 11 -3 11 0 C11 3 9.2 5.8 6.4 6.2 C7.4 3 7.4 -3 6.4 -6.2z"/></g>
</svg>
<div style="position:absolute;left:1646px;top:61px;font-size:66px;line-height:90px;font-weight:900;color:#444;-webkit-text-stroke:2.5px #444;letter-spacing:7px;white-space:nowrap">码商网</div>
</div>
</div>

</body></html>
